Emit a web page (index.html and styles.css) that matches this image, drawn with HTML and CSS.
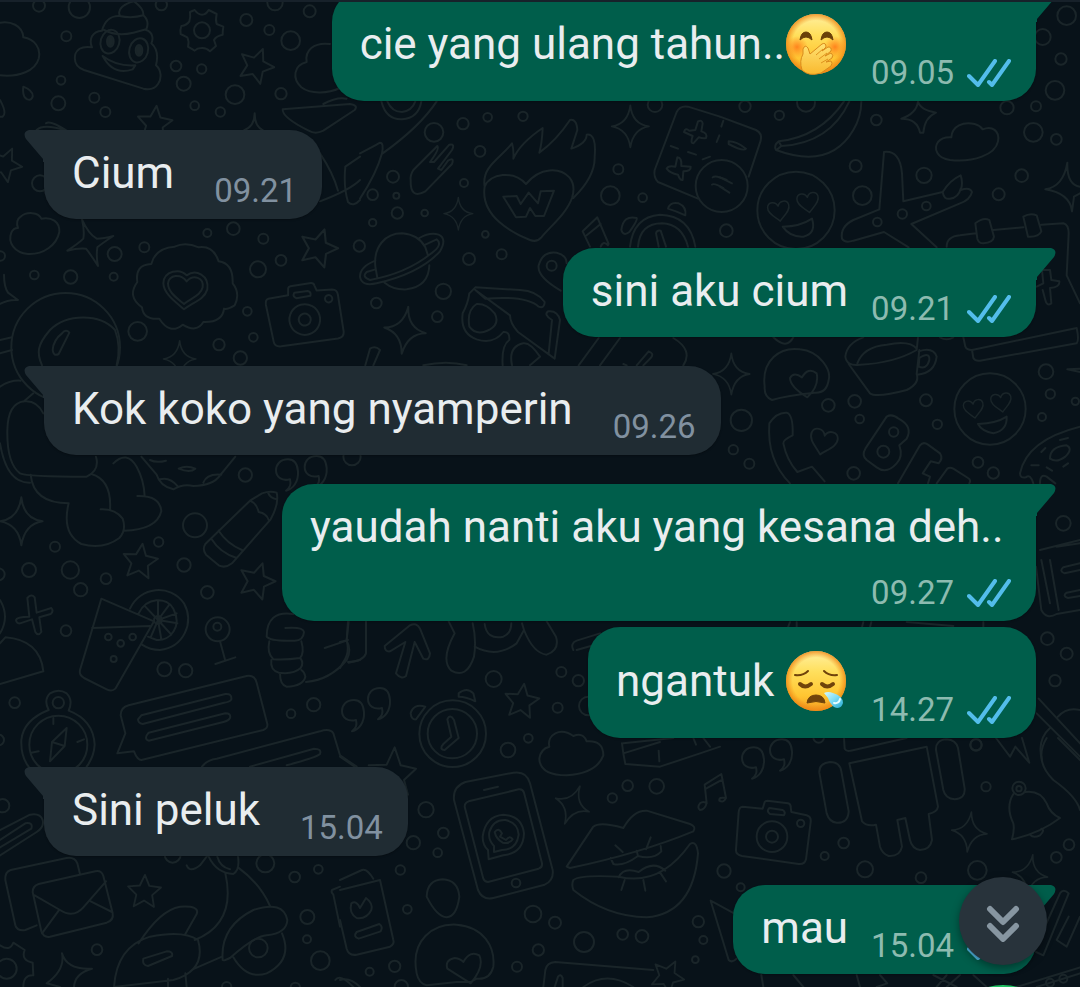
FILE: index.html
```html
<!DOCTYPE html>
<html lang="id">
<head>
  <meta charset="UTF-8" />
  <meta name="viewport" content="width=device-width, initial-scale=1.0" />
  <title>Chat</title>
  <link rel="stylesheet" href="styles.css">
</head>
<body>
  <!-- shared icons -->
  <svg class="defs" aria-hidden="true">
    <symbol id="ticks" viewBox="0 0 44 28">
      <path d="M2 17L11 26L28 2M22 23L25 26L42 2" fill="none" stroke="currentColor" stroke-width="4" stroke-linecap="round" stroke-linejoin="round"/>
    </symbol>
    <symbol id="tail" viewBox="0 0 20 32">
      <path d="M0 0H15Q22 2 18 9L1 29V32H0Z" fill="currentColor"/>
    </symbol>
    <symbol id="star" viewBox="-60 -60 120 120" overflow="visible">
      <path d="M0-55L15-21L52-17L25 8L32 45L0 26L-32 45L-25 8L-52-17L-15-21Z"/>
    </symbol>
    <symbol id="spark" viewBox="-70 -70 140 140" overflow="visible">
      <path d="M0-70Q6-8 62 0Q10 8 0 70Q-8 10-62 0Q-8-8 0-70Z"/>
    </symbol>
    <symbol id="heart" viewBox="-50 -50 100 100" overflow="visible">
      <path d="M0 42C-18 22-46 6-42-18C-38-40-8-40 0-18C8-40 38-40 42-18C46 6 18 22 0 42Z"/>
    </symbol>
    <symbol id="quote" viewBox="0 0 80 100" overflow="visible">
      <path d="M36 0C12 0 0 16 0 33C0 54 18 66 42 60C46 76 42 84 30 94C50 90 68 68 66 36C64 12 52 0 36 0Z"/>
    </symbol>
    <symbol id="camera" viewBox="0 0 230 200" overflow="visible">
      <path d="M24 18L84 24L90 4Q92 0 98 0L160 8Q168 10 168 18L170 34L216 44Q230 48 228 64L214 176Q210 192 192 190L22 166Q2 162 4 146L12 34Q14 18 24 18ZM104 22L144 28Q154 34 148 44L106 40Q94 32 104 22Z"/>
      <circle cx="112" cy="108" r="46"/><circle cx="112" cy="108" r="18"/><circle cx="198" cy="68" r="11"/>
    </symbol>
    <linearGradient id="face" x1="0" y1="0" x2="0" y2="1">
      <stop offset="0" stop-color="#fff0a0"/><stop offset=".35" stop-color="#ffdf5c"/><stop offset=".75" stop-color="#ffc531"/><stop offset="1" stop-color="#f39a22"/>
    </linearGradient>
    <radialGradient id="edge">
      <stop offset=".78" stop-color="#f08b16" stop-opacity="0"/><stop offset="1" stop-color="#ee8313" stop-opacity=".8"/>
    </radialGradient>
    <radialGradient id="blush">
      <stop offset="0" stop-color="#ff6a10" stop-opacity=".75"/><stop offset="1" stop-color="#ff7a10" stop-opacity="0"/>
    </radialGradient>
    <linearGradient id="hand" x1="0" y1="0" x2="0" y2="1">
      <stop offset="0" stop-color="#ffe273"/><stop offset="1" stop-color="#f9b92e"/>
    </linearGradient>
    <linearGradient id="drop" x1="0" y1="0" x2="1" y2="1">
      <stop offset="0" stop-color="#d9fbff"/><stop offset=".5" stop-color="#7ddcf5"/><stop offset="1" stop-color="#25a9d0"/>
    </linearGradient>
  </svg>

  <main class="chat">
    <svg class="wallpaper" viewBox="0 0 3240 2961" preserveAspectRatio="xMidYMid slice" aria-hidden="true">
      <!-- top left -->
      <g>
        <circle cx="117" cy="17" r="18"/><circle cx="238" cy="22" r="32"/><circle cx="484" cy="14" r="17"/><circle cx="199" cy="109" r="15"/><circle cx="183" cy="241" r="13"/><circle cx="175" cy="310" r="21"/><circle cx="283" cy="293" r="15"/><circle cx="316" cy="336" r="15"/><circle cx="528" cy="198" r="16"/><circle cx="605" cy="207" r="14"/><circle cx="551" cy="251" r="21"/><circle cx="584" cy="317" r="13"/><circle cx="661" cy="336" r="14"/><circle cx="705" cy="284" r="28"/><circle cx="739" cy="60" r="18"/><circle cx="808" cy="90" r="15"/><circle cx="872" cy="122" r="28"/><circle cx="929" cy="34" r="18"/><circle cx="825" cy="8" r="23"/><circle cx="843" cy="281" r="17"/>
        <circle cx="120" cy="550" r="24"/><circle cx="344" cy="762" r="21"/><circle cx="433" cy="742" r="15"/><circle cx="103" cy="825" r="13"/><circle cx="212" cy="831" r="20"/><circle cx="341" cy="830" r="12"/><circle cx="622" cy="699" r="12"/><circle cx="700" cy="686" r="19"/><circle cx="790" cy="716" r="15"/><circle cx="843" cy="781" r="16"/><circle cx="774" cy="808" r="24"/><circle cx="742" cy="934" r="13"/><circle cx="413" cy="994" r="28"/><circle cx="1" cy="768" r="14"/><circle cx="1078" cy="738" r="17"/><circle cx="657" cy="1034" r="17"/><circle cx="760" cy="1012" r="13"/><circle cx="721" cy="1074" r="20"/>
        <path d="M0 68C30 62 68 76 70 112C104 118 124 144 116 176C106 212 58 232 0 226"/>
        <path d="M70 260Q100 272 98 290Q94 302 82 298Q66 290 70 260ZM0 300Q22 340 8 350L0 350"/>
        <path d="M360 48C350 28 370 12 402 4C416 14 432 28 430 46C452 66 440 84 438 90C460 96 460 118 454 130C472 146 474 172 468 196C484 210 486 236 474 252C464 268 450 270 430 266L252 210C224 200 222 180 226 162C232 146 250 138 276 142C266 118 276 94 306 92C314 62 334 46 360 48ZM358 48Q396 56 430 46M312 90Q350 110 400 98L438 88M308 168Q350 200 406 196L398 208Q340 228 308 168Z"/>
        <ellipse cx="330" cy="125" rx="28" ry="36" transform="rotate(16 330 125)"/><ellipse cx="416" cy="151" rx="28" ry="37" transform="rotate(16 416 151)"/>
        <ellipse cx="331" cy="124" rx="10" ry="16" class="solid"/><ellipse cx="417" cy="151" rx="10" ry="16" class="solid"/>
        <path d="M570 36L584 30Q594 44 606 44Q618 44 626 30L650 42Q646 60 650 72L670 80Q668 92 668 104Q648 108 642 120L648 138L630 154Q618 142 604 144Q592 144 584 152L564 140Q568 124 562 112L542 102Q540 88 544 78Q560 76 568 64Q572 50 570 36Z"/><circle cx="606" cy="91" r="24"/>
        <use href="#star" x="708" y="138" width="120" height="120" transform="rotate(22 768 198)"/>
        <use href="#star" x="404" y="312" width="120" height="120" transform="rotate(6 464 372)"/>
        <use href="#star" x="-44" y="436" width="116" height="116" transform="rotate(25 14 494)"/>
        <use href="#star" x="890" y="680" width="130" height="130" transform="rotate(18 955 745)"/>
        <path d="M990 132C940 126 914 152 920 186C880 196 876 236 904 262C932 284 986 280 1020 264M848 328L1050 312Q1076 316 1064 330L970 392Q946 404 926 392Q846 352 848 328ZM970 312Q1010 290 1040 296"/>
        <path d="M764 340Q764 380 790 392M764 340Q764 380 730 392M110 390Q130 370 200 392Q150 360 138 370M960 460Q1000 520 1014 572M960 604Q1050 570 1080 540M1036 500L1080 470M1036 500Q1030 560 1044 606Q1060 622 1080 600"/>
        <path d="M62 650C80 634 116 636 124 656C154 650 180 664 178 696C170 736 130 764 84 762C44 758 22 728 34 698C38 688 44 684 54 684C48 670 52 656 62 650Z"/>
        <path d="M246 658Q264 700 290 716Q310 716 340 708Q306 730 292 742Q288 770 294 798Q274 766 258 746Q232 744 202 752Q236 730 250 716Q254 692 246 658ZM12 824Q12 860 24 878L54 900Q24 898 0 912"/>
        <!-- rosette with heart -->
        <path d="M524 740Q556 724 596 742Q640 736 656 784Q700 790 698 850Q722 880 704 916Q680 930 672 926Q668 968 610 966Q590 1000 548 974Q510 1006 478 956Q430 960 426 922Q380 890 412 846Q404 794 454 792Q466 744 524 740Z"/>
        <path d="M552 928C520 900 492 880 490 850C492 812 540 804 560 826C588 806 628 826 622 868C612 900 580 906 552 928ZM552 912C528 892 504 876 504 850C508 824 542 820 560 844C580 822 612 832 608 862C602 888 572 894 552 912Z"/>
        <use href="#camera" x="800" y="850" width="230" height="200" transform="rotate(-16 915 950)"/>
        <!-- astronaut -->
        <circle cx="197" cy="1042" r="163"/><path d="M345 990C300 940 200 940 150 990C110 1036 110 1060 126 1096M345 990Q364 1040 350 1096M186 1000Q198 986 208 998L176 1062Q160 1070 158 1050Q160 1020 186 1000Z"/>
        <use href="#spark" x="484" y="1022" width="110" height="110"/>
        <path d="M0 1020L36 1012M0 1060L36 1050M0 1160Q30 1140 62 1142M72 1204L100 1180M130 1240Q110 1200 72 1204Q24 1210 22 1290Q20 1390 60 1420Q80 1430 260 1430Q300 1410 288 1370M0 1330Q20 1450 90 1448"/>
      </g>
      <!-- top right -->
      <g transform="translate(2160 0)">
        <circle cx="1040" cy="47" r="28"/><circle cx="968" cy="111" r="24"/><circle cx="1023" cy="177" r="17"/><circle cx="1005" cy="271" r="28"/><circle cx="861" cy="323" r="20"/><circle cx="948" cy="319" r="15"/><circle cx="940" cy="397" r="28"/><circle cx="1009" cy="418" r="16"/><circle cx="75" cy="319" r="17"/><circle cx="178" cy="346" r="14"/><circle cx="258" cy="308" r="27"/><circle cx="469" cy="360" r="16"/><circle cx="407" cy="498" r="18"/><circle cx="427" cy="587" r="28"/><circle cx="612" cy="526" r="23"/><circle cx="905" cy="527" r="19"/><circle cx="836" cy="583" r="18"/><circle cx="19" cy="692" r="19"/><circle cx="472" cy="666" r="13"/><circle cx="547" cy="642" r="14"/><circle cx="619" cy="618" r="13"/>
        <path d="M0 350L108 390Q128 400 122 422L86 530M10 362L4 380M26 424Q50 424 78 446Q70 456 26 432ZM0 532L36 550M0 560L28 578"/>
        <path d="M372 304Q300 410 176 424Q160 436 168 450Q330 510 400 390Q424 350 424 304M388 304Q330 430 184 438L172 448M184 438L176 424"/>
        <path d="M594 304Q600 330 648 338Q614 352 610 398L600 398Q592 356 544 356Q590 340 594 304Z"/>
        <path d="M694 412C696 378 730 364 764 372Q780 376 788 388C816 376 840 392 834 424C826 464 760 488 690 480C650 474 640 446 654 426Q668 410 694 412Z"/>
        <circle cx="228" cy="631" r="116"/>
        <use href="#heart" x="138" y="594" width="76" height="76" transform="rotate(-8 175 630)"/><use href="#heart" x="226" y="568" width="76" height="76" transform="rotate(-8 263 605)"/>
        <path d="M188 680Q240 680 276 656Q290 700 250 710Q210 712 188 680Z"/>
        <path d="M492 456Q540 450 546 520L550 604L668 576Q690 540 722 526Q730 550 722 570Q750 560 756 576Q750 600 720 610L574 672L650 742M478 628L492 456M478 628L400 660Q360 680 366 716Q374 730 400 722L492 696L566 742M668 576Q672 600 690 596Q716 592 722 566"/>
        <path d="M1042 488Q1040 554 1080 560M1056 634Q1050 580 976 568Q1030 560 1042 488M1056 634L1062 590L1080 580M680 740Q680 710 720 706L768 700M820 690L910 682M964 674L1030 670Q1046 674 1046 700L1040 826M766 670Q790 650 808 660L822 710Q820 728 790 730Q776 730 772 716ZM910 650Q930 638 950 646L964 694Q956 712 924 710ZM1040 826L1080 910M950 860L970 850L966 810L990 810L994 840L1018 844Q1020 862 990 864L994 910Q980 920 976 900L968 870"/>
      </g>
      <!-- flaming heart, planet, glasses -->
      <g transform="translate(1080 270)">
        <circle cx="222" cy="127" r="28"/><circle cx="309" cy="101" r="17"/><circle cx="383" cy="82" r="13"/><circle cx="489" cy="79" r="14"/><circle cx="360" cy="184" r="16"/><circle cx="312" cy="279" r="12"/><circle cx="99" cy="260" r="18"/><circle cx="38" cy="314" r="16"/><circle cx="109" cy="317" r="9"/><circle cx="112" cy="369" r="17"/><circle cx="194" cy="369" r="10"/><circle cx="38" cy="398" r="11"/><circle cx="376" cy="433" r="10"/><circle cx="425" cy="493" r="15"/><circle cx="327" cy="507" r="18"/><circle cx="250" cy="604" r="23"/><circle cx="232" cy="680" r="16"/><circle cx="49" cy="639" r="16"/><circle cx="775" cy="238" r="15"/><circle cx="751" cy="317" r="28"/><circle cx="848" cy="323" r="13"/><circle cx="885" cy="44" r="22"/>
        <path d="M64 34Q78 90 126 88Q176 84 184 34M82 34Q96 66 126 66Q156 62 166 34M230 34Q180 110 68 190M0 190Q40 170 60 158Q72 158 66 190Q50 250 0 326"/>
        <path d="M160 240L232 168Q240 176 210 216L222 216L268 164Q286 160 276 180L234 236L244 240L264 212Q284 200 276 222L196 304Q150 330 152 270Q150 256 160 240Z"/>
        <path d="M374 290C364 230 420 206 456 160Q462 180 460 206Q480 160 548 114Q546 160 538 188Q590 150 630 90Q650 86 652 120L634 176Q680 160 680 134Q710 130 704 200Q706 260 640 324M374 290C390 250 460 240 498 282C540 230 600 232 628 262Q648 286 636 324C620 370 570 410 544 442Q530 458 510 450C460 430 360 380 374 290Z"/>
        <path d="M430 320L470 318L482 342L506 308L534 340L542 304L582 302L552 378L526 378L510 354L498 380L468 382Z"/>
        <use href="#spark" x="748" y="46" width="126" height="126"/><use href="#spark" x="246" y="322" width="98" height="98"/><use href="#spark" x="64" y="650" width="142" height="142" transform="rotate(8 135 721)"/>
        <path d="M46 530C40 470 76 430 126 430Q176 434 196 472M208 526Q206 590 140 598Q100 600 74 578M46 512Q0 530 0 560Q4 590 50 580Q180 550 240 484Q262 446 236 434Q210 426 178 444M196 464L230 448Q250 464 214 490Q140 550 30 570Q4 560 20 546L46 538M46 530L52 564M196 472L204 496"/>
        <path d="M668 424L712 382L746 462M668 424L690 470M680 436L722 402M722 470Q730 450 744 466M784 420Q790 374 830 384Q834 390 808 426Q790 440 784 420ZM924 356Q930 334 956 340Q980 350 976 376Q950 364 924 356ZM810 470Q820 380 900 374Q990 376 1006 470M834 470Q840 400 906 400Q966 402 984 470M888 430Q890 420 902 422L918 470M896 470L888 430"/>
        <!-- calculator -->
        <path d="M1080 80L984 50Q960 46 950 66L884 240Q880 262 894 276L1014 326M972 126Q976 112 988 122L1006 120L1014 94Q1026 88 1028 100L1024 124Q1044 130 1038 144Q1030 146 1016 142L1000 160Q990 160 998 138ZM920 236Q924 226 946 230L952 202Q966 202 964 228L992 230Q994 244 970 244L968 270Q960 272 954 254Q930 250 920 236ZM932 168L954 176M984 186L1008 194M1028 208L1050 200M1070 156L1078 136"/><circle cx="1085" cy="288" r="78"/><path d="M1058 262Q1066 254 1100 270M1056 284Q1062 278 1090 294"/>
        <path d="M602 602Q530 560 536 526Q548 482 590 488Q620 496 620 520"/><circle cx="575" cy="527" r="15"/>
        <path d="M328 610L346 592L480 600Q530 602 554 636Q554 656 536 650Q500 616 376 626L346 600M328 610Q324 640 308 670Q300 730 350 748Q400 764 430 726Q450 724 448 750Q424 766 428 826M346 600L450 676Q450 700 474 726L584 806M584 806L600 690Q592 660 564 664Q550 674 576 690L566 790M350 642Q320 660 328 710Q350 740 390 718Q420 700 404 670Q380 640 350 642ZM456 826Q444 770 490 760Q510 756 540 800L510 826"/>
        <path d="M16 826L30 776Q46 766 60 780L40 826M190 826Q260 810 320 826M656 826L716 744M720 826L780 744M830 826L866 784Q884 790 872 804L850 826M940 744Q1000 780 970 826M790 822L800 826"/>
      </g>
      <!-- cup, phone, letters on the right -->
      <g transform="translate(2160 540)">
        <circle cx="64" cy="721" r="32"/><circle cx="40" cy="809" r="14"/><circle cx="88" cy="851" r="15"/><circle cx="325" cy="676" r="19"/><circle cx="404" cy="664" r="19"/><circle cx="419" cy="717" r="13"/><circle cx="401" cy="880" r="19"/><circle cx="618" cy="661" r="18"/><circle cx="652" cy="733" r="14"/><circle cx="978" cy="575" r="22"/><circle cx="991" cy="642" r="14"/><circle cx="1066" cy="664" r="11"/><circle cx="966" cy="711" r="12"/><circle cx="774" cy="847" r="16"/><circle cx="820" cy="879" r="17"/>
        <use href="#spark" x="-28" y="520" width="124" height="124"/>
        <path d="M134 620C124 540 180 500 240 508C300 514 334 570 326 600Q320 640 284 638Q200 646 156 660Q132 650 134 620ZM262 652Q210 620 210 594Q222 574 246 592Q264 560 290 580Q298 620 262 652Z"/>
        <path d="M376 530Q380 490 430 472M376 530Q380 560 420 554Q520 550 590 510L594 472M412 550Q430 500 500 494Q570 480 590 506M386 552L450 640Q470 654 560 630Q600 610 590 582L598 510M596 514Q640 500 650 530Q644 580 592 584M598 534Q630 514 628 540Q620 570 596 560Z"/>
        <circle cx="810" cy="687" r="107"/><use href="#heart" x="726" y="650" width="70" height="70" transform="rotate(-8 761 685)"/><use href="#heart" x="808" y="630" width="72" height="72" transform="rotate(-8 844 666)"/><path d="M774 732Q830 730 860 710Q862 752 820 760Q786 754 774 732Z"/>
        <path d="M148 730Q170 696 200 698Q220 704 218 766Q188 780 190 790Q200 840 232 876L276 860L314 904M148 730Q140 840 210 910"/>
        <use href="#heart" x="262" y="736" width="96" height="96" transform="rotate(14 310 784)"/>
        <path d="M500 710Q516 700 536 716Q580 740 560 776L538 796Q550 830 530 850Q500 884 470 862L440 840Q424 826 436 806ZM534 910L600 796Q610 784 624 794L660 820Q670 836 656 850L632 844L608 880L630 890L624 910M650 910L682 866Q690 860 700 866L744 894Q754 900 748 910"/><circle cx="521" cy="756" r="14"/><circle cx="490" cy="815" r="18"/>
        <path d="M1080 740Q920 780 900 880Q900 896 918 892Q930 880 940 910M960 910Q960 880 980 890L1006 910M990 836Q990 800 1040 796Q1060 806 1036 830Q1010 850 990 836ZM1020 780L1044 774M964 816L976 804M934 856H956M980 862L996 872M1030 860L1044 850"/>
        <path d="M730 472L736 500Q740 510 756 510L1070 444M756 510L760 534Q766 544 780 542L1070 490Q1078 480 1070 444M1080 566L1042 568L1080 576"/>
        <path d="M160 472Q200 510 220 472M660 472Q680 484 700 472"/>
      </g>
      <!-- left middle -->
      <g transform="translate(0 1320)">
        <circle cx="736" cy="105" r="20"/><circle cx="585" cy="256" r="36"/><circle cx="165" cy="320" r="15"/><circle cx="476" cy="306" r="14"/><circle cx="552" cy="375" r="20"/><circle cx="87" cy="390" r="21"/><circle cx="211" cy="390" r="26"/><circle cx="242" cy="449" r="20"/><circle cx="318" cy="416" r="16"/><circle cx="622" cy="457" r="19"/><circle cx="198" cy="572" r="16"/><circle cx="-4" cy="403" r="18"/><circle cx="493" cy="688" r="21"/><circle cx="557" cy="692" r="20"/><circle cx="44" cy="788" r="16"/><circle cx="941" cy="794" r="20"/><circle cx="873" cy="821" r="13"/><circle cx="-4" cy="900" r="16"/><circle cx="1056" cy="50" r="26"/>
        <use href="#spark" x="-8" y="172" width="144" height="144"/><use href="#star" x="360" y="306" width="120" height="120" transform="rotate(8 420 366)"/><use href="#star" x="708" y="362" width="124" height="124" transform="rotate(18 770 424)"/>
        <path d="M92 104Q100 190 206 190M274 102Q336 120 330 210M206 190Q184 280 244 312Q310 330 358 294Q380 270 368 236Q346 206 302 208M340 70Q380 30 410 80Q432 120 434 168M412 168Q480 166 484 214Q470 270 372 272"/>
        <path d="M424 50L470 104Q480 138 520 148Q550 130 580 138Q640 136 660 106L706 50M480 118Q510 110 534 140M610 128Q620 100 664 104M536 86Q560 74 586 86Q570 100 536 86ZM450 60Q470 70 498 62"/>
        <use href="#quote" x="828" y="58" width="80" height="100"/><use href="#quote" x="914" y="48" width="80" height="100"/>
        <path d="M750 182L786 160Q810 152 830 158Q838 190 812 238L696 370Q676 386 656 376L618 344Q606 328 616 312ZM750 182Q770 190 776 216Q800 220 806 240M804 158Q810 174 830 178M634 296Q660 338 710 354M656 272Q680 310 726 330"/>
        <path d="M48 540Q50 530 88 530L82 474Q94 460 104 472L110 518L154 504Q162 514 152 522L118 532L124 576Q114 590 106 576L96 538L60 550Q50 552 48 540ZM0 480Q30 530 0 580M0 610L16 592Q120 600 130 694L0 732"/>
        <!-- drink with a slice of lemon -->
        <path d="M304 476L462 544L346 746Q336 756 320 748L252 714Q236 704 240 690ZM276 564L450 558M390 506C420 440 510 430 552 490C584 550 550 622 480 630Q450 630 426 614M416 520C440 470 500 470 520 506C548 560 510 604 470 600L444 590M474 540L474 482M474 540L508 494M474 540L530 520M474 540L532 550M474 540L514 584M474 540L484 598M474 540L452 592M474 540L436 500"/><circle cx="474" cy="540" r="12"/><circle cx="325" cy="591" r="10"/><circle cx="362" cy="610" r="10"/><circle cx="398" cy="591" r="10"/><circle cx="341" cy="657" r="9"/>
        <circle cx="653" cy="568" r="36"/><circle cx="652" cy="560" r="12"/><path d="M660 604L676 662M646 672L706 652"/>
        <path d="M880 522Q800 510 800 590Q810 604 880 602Q910 604 912 576Q910 560 856 564M808 604Q800 640 820 658Q860 660 900 654Q914 640 904 604M814 660Q810 690 836 698Q880 704 902 684Q912 670 902 656M840 700Q840 736 860 740Q910 738 916 710Q914 696 904 690M918 726Q990 720 1040 660Q1056 630 1040 602L974 624M1040 602L1044 544M1046 668L1080 660"/>
        <!-- compass -->
        <circle cx="175" cy="788" r="17"/><path d="M146 810Q130 780 150 760Q176 744 200 760Q220 780 206 812Q280 840 284 914Q282 950 260 980M146 810Q70 840 64 900Q62 950 86 980"/><circle cx="175" cy="914" r="87"/><path d="M200 864L156 906L150 964L194 918ZM156 906L194 918M160 834V852M94 938L116 934M232 906L252 898"/>
        <path d="M386 796L740 708Q764 704 770 728L802 852Q804 864 790 870L424 960Q412 960 402 934L352 940L376 880L362 826Q362 802 386 796ZM424 826L676 762Q696 760 694 778Q690 786 672 788L428 852Q414 850 414 838ZM446 878L676 820Q694 820 690 834Q686 842 670 846L446 902Q430 896 446 878ZM606 980Q620 960 650 956L960 874Q990 864 1000 880L1020 946L1070 980M750 980L942 926Q966 926 960 942Q950 952 860 976"/>
      </g>
      <!-- right edge, middle -->
      <g transform="translate(2160 1680)">
        <circle cx="982" cy="236" r="19"/><circle cx="1040" cy="281" r="18"/><circle cx="1005" cy="362" r="17"/><circle cx="768" cy="555" r="17"/><circle cx="1030" cy="-110" r="22"/>
        <path d="M948 20L964 150Q980 180 1010 162L1080 150M1016 150L990 0M964 0L990 130M1080 10L1030 22Q1016 34 1034 40L1080 30M1080 90L1040 98Q1026 108 1044 114L1080 108M960 -30L1080 -60M1010 -40L1080 -50"/>
        <path d="M956 416L1080 550M950 460L1080 590M1014 470Q1040 440 1080 450M966 600Q950 540 990 504"/>
        <path d="M210 186L204 202M230 186V202M430 186L426 202M454 186L450 202M560 186L700 198M790 186V202"/>
      </g>
      <!-- bottom middle -->
      <g transform="translate(1020 1860)">
        <circle cx="461" cy="177" r="24"/><circle cx="664" cy="156" r="15"/><circle cx="715" cy="182" r="17"/><circle cx="653" cy="263" r="15"/><circle cx="504" cy="390" r="22"/><circle cx="565" cy="355" r="13"/><circle cx="745" cy="258" r="28"/><circle cx="258" cy="569" r="23"/><circle cx="310" cy="639" r="16"/><circle cx="220" cy="668" r="20"/><circle cx="293" cy="698" r="13"/><circle cx="181" cy="750" r="14"/><circle cx="202" cy="868" r="13"/><circle cx="817" cy="534" r="14"/><circle cx="863" cy="497" r="16"/><circle cx="950" cy="499" r="22"/><circle cx="579" cy="882" r="25"/><circle cx="645" cy="908" r="18"/><circle cx="732" cy="966" r="30"/><circle cx="848" cy="943" r="16"/><circle cx="906" cy="949" r="19"/><circle cx="595" cy="990" r="17"/><circle cx="531" cy="1040" r="15"/><circle cx="164" cy="1039" r="17"/><circle cx="89" cy="1055" r="12"/><circle cx="184" cy="1100" r="20"/><circle cx="1075" cy="905" r="17"/><circle cx="1066" cy="1019" r="10"/>
        <path d="M26 4L20 60Q30 100 10 126L0 144M78 4V100Q70 124 24 126M0 66L24 60M134 78L210 16Q230 6 240 26L270 100Q268 124 250 116L224 66L198 168Q184 180 168 160L196 66L150 94Q134 96 134 78ZM326 4L344 40Q300 120 334 152Q380 178 402 110Q410 60 398 10M404 80Q470 116 530 70L552 30L546 10M434 12Q440 60 490 50Q514 40 514 10M552 30Q580 100 620 104Q660 90 648 50L620 4M700 90Q690 70 710 62L780 40M710 90L760 76"/>
        <use href="#quote" x="6" y="240" width="80" height="100"/><use href="#quote" x="84" y="204" width="80" height="100"/>
        <!-- alarm clock -->
        <circle cx="338" cy="341" r="100"/><circle cx="337" cy="341" r="74"/><path d="M322 298Q330 280 342 300L356 354L314 390Q296 388 310 372L334 350ZM212 280Q220 250 256 260L228 298Q214 300 212 280ZM356 220Q380 200 400 220L406 244Q380 230 356 230Z"/>
        <use href="#star" x="486" y="186" width="118" height="118" transform="rotate(8 545 245)"/>
        <path d="M86 436L140 434L164 382L182 436L228 446L192 480L204 524M0 410L44 440"/>
        <path d="M628 380C620 344 660 320 700 348Q730 336 740 364Q790 360 790 406Q770 460 680 466Q600 466 598 416Q602 386 628 380Z"/>
        <!-- mobile phone -->
        <path d="M376 486L520 458Q560 452 570 490L638 750Q642 782 614 794L460 834Q428 842 414 810L342 540Q338 500 376 486ZM386 544L536 508Q548 506 552 518L606 730Q608 742 596 746L444 786Q434 786 430 776L374 560Q374 548 386 544ZM432 510L474 500M444 690Q428 676 428 650Q436 588 490 584Q546 588 552 640Q550 700 490 706L446 718ZM462 678Q444 660 448 636Q460 598 496 600Q534 608 536 644Q530 690 486 690L462 696ZM464 636Q476 620 486 640L480 650L498 660Q510 644 518 658Q510 672 488 668Q468 656 464 636Z"/><circle cx="528" cy="789" r="13"/>
        <use href="#spark" x="636" y="494" width="122" height="122" transform="rotate(22 697 555)"/>
        <!-- lips -->
        <path d="M680 740L760 620Q780 604 850 624Q880 570 920 572L1050 612Q1070 620 1060 634Q900 700 690 744ZM700 780Q720 764 836 770Q960 800 1050 672Q1070 660 1074 700Q1060 880 920 892Q800 890 700 810Q694 794 700 780ZM812 714L820 732Q850 740 894 708L890 692M894 708Q940 720 964 694L962 678M836 772Q850 740 896 756Q940 720 976 752M826 676L848 696M932 652L918 688M854 780L844 810M910 780L916 812M962 760L978 784"/>
        <path d="M850 370L1000 354M846 370L850 400L960 366M850 400L856 432L960 440L1080 400L1140 380M956 392L958 424M1060 354L1068 374M1090 354L1110 380"/>
        <path d="M0 810L120 780L160 960Q164 972 150 980L50 1004Q26 1008 20 986L0 900M0 780L66 750Q80 744 100 776M34 850Q50 840 60 864L78 834Q100 850 94 870Q80 898 50 894Q26 880 34 850ZM50 936L118 912Q130 920 122 934L56 956Q38 950 50 936Z"/>
        <path d="M260 830Q262 780 308 778Q354 780 358 830Q350 890 320 892Q290 890 260 830ZM230 1060C210 960 280 910 350 914C430 920 466 980 460 1040Q450 1080 410 1076L392 1086L350 1086L260 1096Q236 1090 230 1060ZM392 1090L322 1046Q314 1020 344 1014Q362 1016 370 1026Q390 990 418 1006Q434 1040 392 1090ZM610 1101L616 1050Q620 1028 646 1026L940 1050M644 1101L654 1070Q662 1060 668 1074V1101M730 1101Q800 1050 880 1101M0 1080Q30 1070 60 1101"/>
        <use href="#star" x="926" y="1014" width="112" height="112" transform="rotate(28 982 1070)"/>
      </g>
      <!-- bottom left -->
      <g transform="translate(0 2220)">
        <circle cx="8" cy="197" r="20"/><circle cx="796" cy="370" r="27"/><circle cx="884" cy="411" r="16"/><circle cx="955" cy="388" r="13"/><circle cx="922" cy="531" r="21"/><circle cx="921" cy="598" r="12"/><circle cx="961" cy="662" r="28"/><circle cx="291" cy="629" r="16"/><circle cx="775" cy="624" r="28"/><circle cx="518" cy="344" r="24"/><circle cx="20" cy="686" r="30"/><circle cx="680" cy="740" r="14"/><circle cx="886" cy="742" r="14"/>
        <path d="M0 270L90 224Q120 218 128 240Q134 260 110 276L0 346M0 300L76 250Q100 246 94 266L0 322"/>
        <path d="M110 556L76 570Q52 574 46 556L16 420Q14 396 32 390L200 354Q224 350 232 370L240 402M116 432L286 394Q304 390 310 408L338 520Q342 540 320 548L150 590Q132 594 124 574L98 456Q98 438 116 432ZM104 466L180 510Q220 536 250 502L318 424M176 512L126 580M272 484L336 516"/>
        <use href="#star" x="376" y="400" width="114" height="114" transform="rotate(2 433 457)"/>
        <path d="M186 640Q200 690 276 686Q224 700 222 741M186 640Q196 690 140 730L180 741M0 616Q30 636 40 608L74 630Q62 660 98 668L100 706Q70 704 70 741"/>
        <path d="M342 741Q350 620 450 590Q550 570 594 600Q620 690 520 720L342 741M416 610Q480 510 540 500Q600 496 590 522L556 582M430 656L500 634Q520 634 516 648L444 678Q426 676 430 656ZM504 716V741M556 700L560 741M578 688L666 650M584 600Q710 550 676 400M560 376Q570 400 600 376L620 350M626 350Q650 400 700 402Q720 390 714 350M652 350Q660 380 690 388M714 382Q780 430 810 498"/>
        <path d="M668 660Q660 560 760 510Q850 480 862 540Q860 580 800 586Q760 590 690 654Q670 664 668 660ZM700 652Q740 720 800 700Q880 660 846 580"/>
        <path d="M1006 720Q1020 700 1060 741"/>
        <path d="M1020 440L996 450Q992 456 1000 464L1020 560"/>
      </g>
      <!-- bottom right -->
      <g transform="translate(2100 2190)">
        <circle cx="431" cy="339" r="16"/><circle cx="374" cy="378" r="12"/><circle cx="495" cy="418" r="24"/><circle cx="663" cy="443" r="16"/><circle cx="72" cy="423" r="20"/><circle cx="122" cy="472" r="12"/><circle cx="832" cy="421" r="28"/><circle cx="858" cy="170" r="14"/><circle cx="1107" cy="344" r="16"/><circle cx="1069" cy="382" r="16"/><circle cx="828" cy="44" r="17"/><circle cx="10" cy="630" r="12"/><circle cx="356" cy="22" r="16"/>
        <use href="#quote" x="126" y="52" width="80" height="100"/><use href="#quote" x="210" y="28" width="80" height="100"/>
        <path d="M20 220L14 164L64 132L78 204M18 176L68 148M20 220Q14 240 0 240Q-10 232 0 220Q10 212 20 220M78 204Q70 220 58 212Q56 200 78 204Z"/>
        <use href="#camera" x="104" y="212" width="230" height="200"/>
        <path d="M432 24L434 56Q440 66 452 62L620 24M448 100L680 50L714 230Q712 246 686 252L696 330Q690 360 660 360Q636 356 630 330L616 264L592 270L606 350Q600 380 566 378Q546 370 540 350L528 284Q500 290 486 274ZM358 128Q356 100 390 96Q420 96 424 124L446 244Q444 280 410 278Q388 276 380 250ZM708 60Q706 30 740 28Q768 30 774 54L794 176Q796 206 764 208Q736 206 730 180Z"/>
        <use href="#spark" x="748" y="246" width="120" height="120" transform="rotate(6 808 306)"/><use href="#spark" x="930" y="374" width="120" height="120" transform="rotate(8 990 434)"/>
        <!-- bell -->
        <circle cx="957" cy="175" r="20"/><circle cx="957" cy="176" r="8"/><path d="M940 192Q916 230 940 280Q944 300 936 328Q1020 310 1080 264Q1050 250 1040 220Q1020 180 976 186M990 314Q1000 326 1020 316Q1036 300 1024 296M888 24L930 80L946 50L988 98L966 24M1040 24Q1000 90 1060 150Q1130 200 1140 240M1074 24L1140 90"/>
        <path d="M32 512L120 560M32 512L86 690Q96 700 110 686M184 735L190 771M280 735L310 771M470 735L480 771M540 735L562 760L530 771M700 735L770 771M740 735L710 771M780 735L740 771M820 735L860 771M1080 490Q1090 474 1106 490L1030 676L1008 666M1030 600L1080 490M1106 560L1070 630L1100 650L1140 560M950 771L1140 712M1010 771L1140 730"/><circle cx="1050" cy="758" r="12"/><circle cx="1090" cy="746" r="12"/>
      </g>
    </svg>

    <ol class="thread">
      <li class="msg out first">
        <svg class="tail"><use href="#tail"/></svg>
        <p class="text">cie yang ulang tahun..<svg class="emoji" viewBox="0 0 62 62" role="img" aria-label="🤭">
          <circle cx="31" cy="31" r="30" fill="url(#face)"/><circle cx="31" cy="31" r="30" fill="url(#edge)"/>
          <circle cx="12" cy="34" r="11" fill="url(#blush)"/><circle cx="50" cy="34" r="11" fill="url(#blush)"/>
          <path d="M15 27Q16 19 21 19Q26 19 27 27Q21 21 15 27ZM36 27Q37 19 42 19Q47 19 48 27Q42 21 36 27Z" fill="#6b4109" stroke="#6b4109" stroke-width="1"/>
          <path d="M17 57Q14 48 18 41L18 36Q20 31 23 35L25 41L37 31Q41 29 41 34L37 38L43 34Q47 34 46 38L40 43L46 40Q49 42 47 45L41 49L46 48Q48 50 46 53L36 60Q24 64 17 57Z" fill="url(#hand)" stroke="#d98a1c"/>
          <path d="M31 42L38 36M34 46L42 40M36 50L43 46" fill="none" stroke="#df931e" stroke-width="1"/>
        </svg></p>
        <span class="meta"><time>09.05</time><svg class="ticks"><use href="#ticks"/></svg></span>
      </li>
      <li class="msg in first">
        <svg class="tail"><use href="#tail"/></svg>
        <p class="text">Cium</p>
        <span class="meta"><time>09.21</time></span>
      </li>
      <li class="msg out first">
        <svg class="tail"><use href="#tail"/></svg>
        <p class="text">sini aku cium</p>
        <span class="meta"><time>09.21</time><svg class="ticks"><use href="#ticks"/></svg></span>
      </li>
      <li class="msg in first">
        <svg class="tail"><use href="#tail"/></svg>
        <p class="text">Kok koko yang nyamperin</p>
        <span class="meta"><time>09.26</time></span>
      </li>
      <li class="msg out first">
        <svg class="tail"><use href="#tail"/></svg>
        <p class="text">yaudah nanti aku yang kesana deh..</p>
        <span class="meta"><time>09.27</time><svg class="ticks"><use href="#ticks"/></svg></span>
      </li>
      <li class="msg out">
        <p class="text">ngantuk <svg class="emoji" viewBox="0 0 62 62" role="img" aria-label="😪">
          <circle cx="31" cy="31" r="30" fill="url(#face)"/><circle cx="31" cy="31" r="30" fill="url(#edge)"/>
          <g fill="none" stroke="#70430b" stroke-linecap="round">
            <path d="M10 25Q18 26 23 21M39 21Q44 26 52 25" stroke-width="2"/>
            <path d="M15 34Q20 39 26 34M37 34Q42 39 48 34" stroke-width="4"/>
          </g>
          <path d="M22 53Q23 45 31 45Q39 45 40 53Q31 50 22 53Z" fill="#70430b" stroke="#70430b" stroke-linejoin="round"/>
          <path d="M39 43Q43 41 48 43Q58 46 58 53Q56 60 49 57Q45 54 43 48Z" fill="url(#drop)"/>
          <path d="M49 53Q54 54 55 49" fill="none" stroke="#e5fdff" stroke-width="2" stroke-linecap="round"/>
        </svg></p>
        <span class="meta"><time>14.27</time><svg class="ticks"><use href="#ticks"/></svg></span>
      </li>
      <li class="msg in first">
        <svg class="tail"><use href="#tail"/></svg>
        <p class="text">Sini peluk</p>
        <span class="meta"><time>15.04</time></span>
      </li>
      <li class="msg out first">
        <svg class="tail"><use href="#tail"/></svg>
        <p class="text">mau</p>
        <span class="meta"><time>15.04</time><svg class="ticks"><use href="#ticks"/></svg></span>
      </li>
    </ol>

    <button class="mic" type="button" aria-label="Pesan suara"></button>
    <button class="scroll-down" type="button" aria-label="Gulir ke bawah">
      <svg viewBox="0 0 34 38"><path d="M4 5L17 18L30 5M4 22L17 35L30 22"/></svg>
    </button>
  </main>
</body>
</html>
```

FILE: styles.css
```css
:root {
  --bg: #081219;
  --doodle: #1a2529;
  --bubble-in: #202c33;
  --bubble-out: #005e4b;
  --text: #e9edef;
  --time-in: #8191a0;
  --time-out: #8dbbb0;
  --ticks: #53bdeb;
}
* {
  box-sizing: border-box;
}
body {
  margin: 0;
  background: var(--bg);
  color: var(--text);
  font-family: Roboto, "Noto Sans", sans-serif;
}
.defs {
  position: absolute;
  width: 0;
  height: 0;
}
.chat {
  position: relative;
  height: 100vh;
  overflow: hidden;
  border-top: 2px solid #17212a;
}
.wallpaper {
  position: absolute;
  top: -2px;
  left: 0;
  width: 100%;
  height: 100vh;
  fill: none;
  stroke: var(--doodle);
  stroke-width: 6;
  stroke-linejoin: round;
  stroke-linecap: round;
}
.wallpaper .solid {
  fill: var(--doodle);
}

/* messages */
.thread {
  position: relative;
  display: flex;
  flex-direction: column;
  gap: 6px;
  list-style: none;
  margin: -35px 0 0;
  padding: 0 44px;
}
.msg {
  position: relative;
  display: flex;
  flex-wrap: wrap;
  justify-content: flex-end;
  align-items: flex-end;
  row-gap: 10px;
  max-width: 76%;
  padding: 17px 25px 9px 28px;
  border-radius: 32px;
  box-shadow: 0 1px 2px #0004;
}
.msg.first {
  margin-top: 23px;
}
.msg.in {
  align-self: flex-start;
  background: var(--bubble-in);
  column-gap: 40px;
}
.msg.out {
  align-self: flex-end;
  background: var(--bubble-out);
  column-gap: 23px;
}
.msg.in.first {
  border-top-left-radius: 0;
}
.msg.out.first {
  border-top-right-radius: 0;
}
.tail {
  position: absolute;
  top: 0;
  width: 20px;
  height: 32px;
}
.out .tail {
  left: 100%;
  color: var(--bubble-out);
}
.in .tail {
  right: 100%;
  color: var(--bubble-in);
  transform: scaleX(-1);
}
.text {
  flex-grow: 1;
  margin: 0 0 11px;
  font-size: 44px;
  line-height: 52px;
}
.emoji {
  width: 62px;
  height: 62px;
  margin: 6px 1px 6px 0;
  vertical-align: -22px;
}
.meta {
  display: flex;
  align-items: center;
  gap: 13px;
  color: var(--time-out);
  font-size: 33px;
  line-height: 38px;
}
.in .meta {
  color: var(--time-in);
}
.ticks {
  width: 44px;
  height: 28px;
  color: var(--ticks);
}

/* floating buttons */
.scroll-down {
  position: absolute;
  right: 33px;
  bottom: 22px;
  display: grid;
  place-items: center;
  width: 88px;
  height: 88px;
  padding: 4px 0 0;
  border: none;
  border-radius: 50%;
  background: #28333b;
  box-shadow: 0 3px 8px #0006;
  cursor: pointer;
}
.scroll-down svg {
  width: 34px;
  height: 38px;
  fill: none;
  stroke: #8796a1;
  stroke-width: 6;
  stroke-linecap: round;
  stroke-linejoin: round;
}
.mic {
  position: absolute;
  right: 20px;
  bottom: -112px;
  width: 114px;
  height: 114px;
  border: none;
  border-radius: 50%;
  background: #21c063;
}
```
